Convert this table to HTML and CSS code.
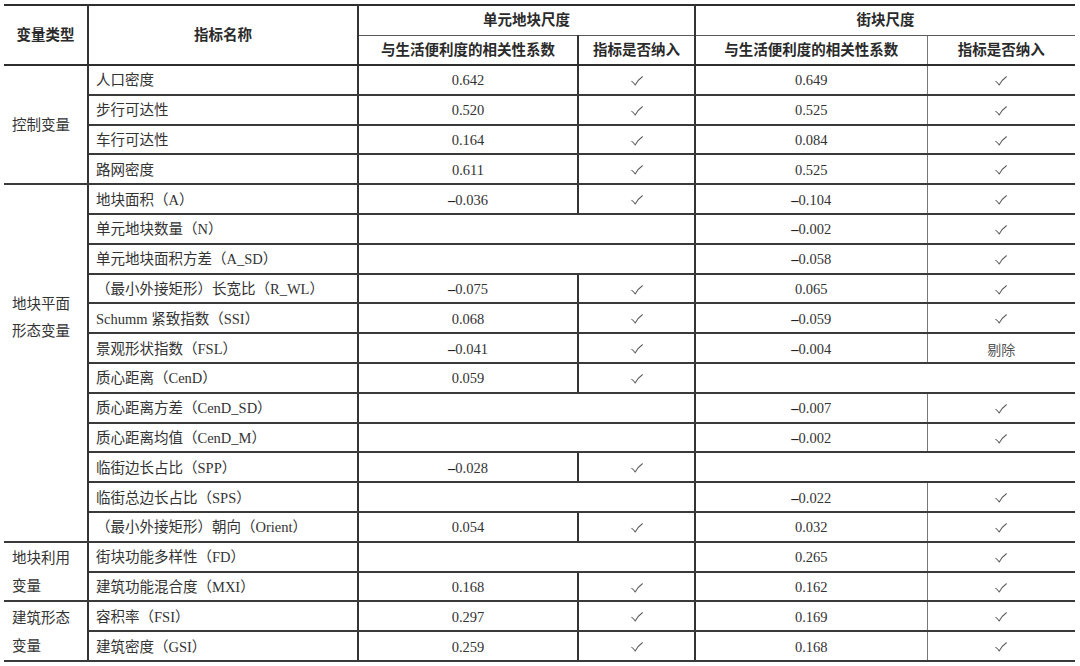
FILE: index.html
```html
<!DOCTYPE html>
<html lang="zh-CN">
<head>
<meta charset="utf-8">
<title>变量表</title>
<link rel="stylesheet" href="styles.css">
</head>
<body>
<svg width="0" height="0" class="defs" aria-hidden="true">
  <defs>
    <symbol id="ck" viewBox="0 0 12 10">
      <path d="M0.8 5.4 Q2.4 6.2 4.2 9 Q7.2 3.6 11.4 0.8" fill="none" stroke="#5a5a5a" stroke-width="1.05" stroke-linecap="round" stroke-linejoin="round"/>
    </symbol>
  </defs>
</svg>
<table class="tbl">
  <colgroup>
    <col class="w1"><col class="w2"><col class="w3"><col class="w4"><col class="w5"><col class="w6">
  </colgroup>
  <thead>
    <tr class="h1">
      <th rowspan="2" class="c1">变量类型</th>
      <th rowspan="2" class="c2h">指标名称</th>
      <th colspan="2" class="span-u">单元地块尺度</th>
      <th colspan="2" class="span-b">街块尺度</th>
    </tr>
    <tr class="h2">
      <th class="u-val">与生活便利度的相关性系数</th>
      <th class="u-chk">指标是否纳入</th>
      <th class="b-val">与生活便利度的相关性系数</th>
      <th class="b-chk">指标是否纳入</th>
    </tr>
  </thead>
  <tbody>
    <tr>
      <td rowspan="4" class="grp">控制变量</td>
      <td class="name">人口密度</td>
      <td class="u-val">0.642</td><td class="u-chk"><svg class="ck"><use href="#ck"/></svg></td>
      <td class="b-val">0.649</td><td class="b-chk"><svg class="ck"><use href="#ck"/></svg></td>
    </tr>
    <tr>
      <td class="name">步行可达性</td>
      <td class="u-val">0.520</td><td class="u-chk"><svg class="ck"><use href="#ck"/></svg></td>
      <td class="b-val">0.525</td><td class="b-chk"><svg class="ck"><use href="#ck"/></svg></td>
    </tr>
    <tr>
      <td class="name">车行可达性</td>
      <td class="u-val">0.164</td><td class="u-chk"><svg class="ck"><use href="#ck"/></svg></td>
      <td class="b-val">0.084</td><td class="b-chk"><svg class="ck"><use href="#ck"/></svg></td>
    </tr>
    <tr>
      <td class="name">路网密度</td>
      <td class="u-val">0.611</td><td class="u-chk"><svg class="ck"><use href="#ck"/></svg></td>
      <td class="b-val">0.525</td><td class="b-chk"><svg class="ck"><use href="#ck"/></svg></td>
    </tr>

    <tr>
      <td rowspan="12" class="grp grp-plane">地块平面<br>形态变量</td>
      <td class="name">地块面积（A）</td>
      <td class="u-val"><span class="neg">–</span>0.036</td><td class="u-chk"><svg class="ck"><use href="#ck"/></svg></td>
      <td class="b-val"><span class="neg">–</span>0.104</td><td class="b-chk"><svg class="ck"><use href="#ck"/></svg></td>
    </tr>
    <tr>
      <td class="name">单元地块数量（N）</td>
      <td colspan="2" class="u-empty"></td>
      <td class="b-val"><span class="neg">–</span>0.002</td><td class="b-chk"><svg class="ck"><use href="#ck"/></svg></td>
    </tr>
    <tr>
      <td class="name">单元地块面积方差（A_SD）</td>
      <td colspan="2" class="u-empty"></td>
      <td class="b-val"><span class="neg">–</span>0.058</td><td class="b-chk"><svg class="ck"><use href="#ck"/></svg></td>
    </tr>
    <tr>
      <td class="name">（最小外接矩形）长宽比（R_WL）</td>
      <td class="u-val"><span class="neg">–</span>0.075</td><td class="u-chk"><svg class="ck"><use href="#ck"/></svg></td>
      <td class="b-val">0.065</td><td class="b-chk"><svg class="ck"><use href="#ck"/></svg></td>
    </tr>
    <tr>
      <td class="name">Schumm 紧致指数（SSI）</td>
      <td class="u-val">0.068</td><td class="u-chk"><svg class="ck"><use href="#ck"/></svg></td>
      <td class="b-val"><span class="neg">–</span>0.059</td><td class="b-chk"><svg class="ck"><use href="#ck"/></svg></td>
    </tr>
    <tr>
      <td class="name">景观形状指数（FSL）</td>
      <td class="u-val"><span class="neg">–</span>0.041</td><td class="u-chk"><svg class="ck"><use href="#ck"/></svg></td>
      <td class="b-val"><span class="neg">–</span>0.004</td><td class="b-chk drop">剔除</td>
    </tr>
    <tr>
      <td class="name">质心距离（CenD）</td>
      <td class="u-val">0.059</td><td class="u-chk"><svg class="ck"><use href="#ck"/></svg></td>
      <td colspan="2" class="b-empty"></td>
    </tr>
    <tr>
      <td class="name">质心距离方差（CenD_SD）</td>
      <td colspan="2" class="u-empty"></td>
      <td class="b-val"><span class="neg">–</span>0.007</td><td class="b-chk"><svg class="ck"><use href="#ck"/></svg></td>
    </tr>
    <tr>
      <td class="name">质心距离均值（CenD_M）</td>
      <td colspan="2" class="u-empty"></td>
      <td class="b-val"><span class="neg">–</span>0.002</td><td class="b-chk"><svg class="ck"><use href="#ck"/></svg></td>
    </tr>
    <tr>
      <td class="name">临街边长占比（SPP）</td>
      <td class="u-val"><span class="neg">–</span>0.028</td><td class="u-chk"><svg class="ck"><use href="#ck"/></svg></td>
      <td colspan="2" class="b-empty"></td>
    </tr>
    <tr>
      <td class="name">临街总边长占比（SPS）</td>
      <td colspan="2" class="u-empty"></td>
      <td class="b-val"><span class="neg">–</span>0.022</td><td class="b-chk"><svg class="ck"><use href="#ck"/></svg></td>
    </tr>
    <tr>
      <td class="name">（最小外接矩形）朝向（Orient）</td>
      <td class="u-val">0.054</td><td class="u-chk"><svg class="ck"><use href="#ck"/></svg></td>
      <td class="b-val">0.032</td><td class="b-chk"><svg class="ck"><use href="#ck"/></svg></td>
    </tr>

    <tr>
      <td rowspan="2" class="grp grp-two">地块利用<br>变量</td>
      <td class="name">街块功能多样性（FD）</td>
      <td colspan="2" class="u-empty"></td>
      <td class="b-val">0.265</td><td class="b-chk"><svg class="ck"><use href="#ck"/></svg></td>
    </tr>
    <tr>
      <td class="name">建筑功能混合度（MXI）</td>
      <td class="u-val">0.168</td><td class="u-chk"><svg class="ck"><use href="#ck"/></svg></td>
      <td class="b-val">0.162</td><td class="b-chk"><svg class="ck"><use href="#ck"/></svg></td>
    </tr>

    <tr>
      <td rowspan="2" class="grp grp-two">建筑形态<br>变量</td>
      <td class="name">容积率（FSI）</td>
      <td class="u-val">0.297</td><td class="u-chk"><svg class="ck"><use href="#ck"/></svg></td>
      <td class="b-val">0.169</td><td class="b-chk"><svg class="ck"><use href="#ck"/></svg></td>
    </tr>
    <tr>
      <td class="name">建筑密度（GSI）</td>
      <td class="u-val">0.259</td><td class="u-chk"><svg class="ck"><use href="#ck"/></svg></td>
      <td class="b-val">0.168</td><td class="b-chk"><svg class="ck"><use href="#ck"/></svg></td>
    </tr>
  </tbody>
</table>
</body>
</html>
```
FILE: styles.css
```css
html, body {
  margin: 0;
  padding: 0;
  background: #ffffff;
}
body {
  padding: 4px 5px 0 4px;
  font-family: "Liberation Serif", "Noto Sans CJK SC", serif;
  color: #333333;
}
.defs {
  position: absolute;
  width: 0;
  height: 0;
}
.tbl {
  width: 1071px;
  table-layout: fixed;
  border-collapse: collapse;
  border-top: 2px solid #2e2e2e;
  border-bottom: 2px solid #2e2e2e;
}
.w1 { width: 84px; }
.w2 { width: 270px; }
.w3 { width: 220px; }
.w4 { width: 117px; }
.w5 { width: 232px; }
.w6 { width: 148px; }

th {
  font-family: "Liberation Serif", "Noto Sans CJK SC", serif;
  font-weight: 700;
  font-size: 14.5px;
  color: #2a2a2a;
  text-align: center;
  padding: 0;
  line-height: 20px;
}
thead tr { height: 30px; }
thead tr.h2 th {
  border-top: 1px solid #5a5a5a;
  border-bottom: 2px solid #2e2e2e;
}
th.c1, th.c2h {
  border-bottom: 2px solid #2e2e2e;
}
th.c1 { border-right: 2px solid #333; }
th.c2h { border-right: 2px solid #333; }
th.span-u { border-right: 2px solid #333; border-bottom: 1px solid #5a5a5a; }
th.span-b { border-bottom: 1px solid #5a5a5a; }

td {
  font-size: 14.5px;
  padding: 1px 0 0 0;
  line-height: 20px;
  border-bottom: 2px solid #3a3a3a;
  text-align: center;
  color: #333;
}
tbody tr { height: 29.8px; }

td.grp {
  text-align: left;
  padding: 0 0 0 8px;
  border-right: 2px solid #333;
  vertical-align: middle;
}
td.grp-plane {
  line-height: 27px;
  padding-bottom: 90px;
}
td.grp-two {
  line-height: 28px;
  padding-top: 1px;
}
td.name {
  text-align: left;
  padding-left: 7px;
  border-right: 2px solid #333;
  white-space: nowrap;
}
th.u-val, td.u-val { border-right: 2px solid #333; }
th.u-chk, td.u-chk { border-right: 2px solid #333; }
td.u-empty { border-right: 2px solid #333; }
th.b-val, td.b-val { border-right: 1px solid #777; }

.neg {
  font-weight: 700;
  color: #222;
}
td.drop {
  font-family: "Noto Sans CJK SC", sans-serif;
  font-size: 14px;
  color: #555;
}
.ck {
  width: 12px;
  height: 10px;
  display: inline-block;
  vertical-align: middle;
  position: relative;
  top: -1px;
}
```
